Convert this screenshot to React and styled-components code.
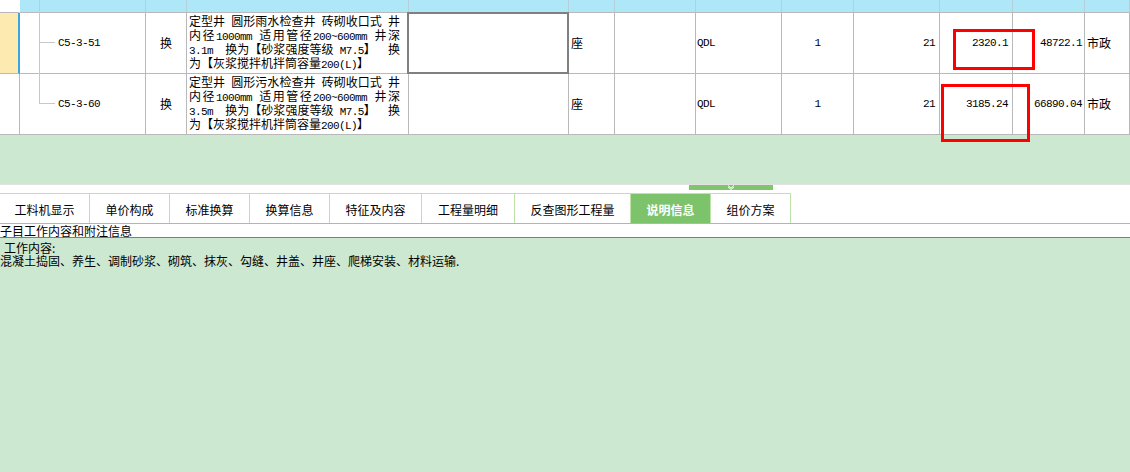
import React from 'react';
import styled, { createGlobalStyle } from 'styled-components';

const GlobalStyle = createGlobalStyle`
  html, body {
    margin: 0;
    padding: 0;
    background: #fff;
  }
  body {
    font-family: "Noto Sans CJK SC", sans-serif;
    font-size: 12px;
    color: #000;
  }
`;

const COLS = '20px 20px 106px 41px 222px 160px 46px 81px 86px 72px 86px 73px 72px 1fr';

const Page = styled.div`
  width: 1130px;
  height: 472px;
  display: flex;
  flex-direction: column;
  overflow: hidden;
  background: #cde8d0;
`;

/* ---------- grid ---------- */
const Table = styled.div`
  position: relative;
  background: #fff;
`;

const HeadRow = styled.div`
  display: grid;
  grid-template-columns: ${COLS};
  height: 13px;
`;

const HeadCell = styled.div`
  box-sizing: border-box;
  background: ${(p) => (p.$blank ? '#fff' : '#aee8f8')};
  border-right: 1px solid ${(p) => (p.$blank ? '#fff' : '#b4cfd8')};
  border-bottom: 1px solid #b9b9b9;
`;

const Row = styled.div`
  display: grid;
  grid-template-columns: ${COLS};
  height: 61px;
`;

const Cell = styled.div`
  position: relative;
  box-sizing: border-box;
  display: flex;
  align-items: center;
  justify-content: ${(p) => p.$align || 'flex-start'};
  padding: 0 ${(p) => p.$pr ?? 2}px 0 ${(p) => p.$pl ?? 2}px;
  border-right: 1px solid #b9b9b9;
  border-bottom: 1px solid #b9b9b9;
  white-space: nowrap;
  line-height: 14px;
  min-width: 0;
`;

const Marker = styled.div`
  box-sizing: border-box;
  background: ${(p) => (p.$current ? '#fdeab0' : '#fff')};
  border-right: ${(p) => (p.$current ? '2px solid #3aa8dc' : '1px solid #b9b9b9')};
  border-bottom: 1px solid #b9b9b9;
`;

const TreeCell = styled(Cell)`
  grid-column: span 2;
  padding-left: 38px;

  &::before {
    content: '';
    position: absolute;
    left: 19px;
    top: -1px;
    width: 1px;
    height: ${(p) => (p.$last ? '31px' : 'calc(100% + 1px)')};
    background: #c8c8c8;
  }
  &::after {
    content: '';
    position: absolute;
    left: 19px;
    top: 29px;
    width: 16px;
    height: 1px;
    background: #c8c8c8;
  }
`;

const Selected = styled(Cell)`
  &::after {
    content: '';
    position: absolute;
    left: -2px;
    top: -1px;
    right: -1px;
    bottom: -1px;
    border: 2px solid #808080;
  }
`;

const Desc = styled(Cell)`
  display: block;
  padding: 1px 8px 0 2px;
  line-height: 14px;
`;

const DescLine = styled.div`
  white-space: pre;
  height: 14px;
  text-align: ${(p) => (p.$justify ? 'justify' : 'left')};
  text-align-last: ${(p) => (p.$justify ? 'justify' : 'left')};
`;

const Num = styled.span`
  font-family: "Liberation Mono", monospace;
  font-size: 11px;
  letter-spacing: -0.6px;
`;

const RedBox = styled.div`
  position: absolute;
  box-sizing: border-box;
  border: 3px solid #ff0000;
  z-index: 2;
`;

/* ---------- tabs ---------- */
const Gap = styled.div`
  height: 49px;
  flex-shrink: 0;
`;

const TabArea = styled.div`
  position: relative;
  flex-shrink: 0;
  background: #fff;
  border-top: 1px solid #e2e2e2;
  padding-top: 8px;
`;

const Handle = styled.div`
  position: absolute;
  left: 689px;
  top: 0;
  width: 84px;
  height: 5px;
  background: #80c46c;
  display: flex;
  justify-content: center;
  align-items: flex-end;
`;

const TabStrip = styled.div`
  display: flex;
  height: 30px;
  border-bottom: 1px solid #98cc84;
`;

const Tab = styled.div`
  box-sizing: border-box;
  width: ${(p) => p.$w}px;
  display: flex;
  align-items: center;
  justify-content: center;
  padding-top: 2px;
  border-top: 1px solid #bde3ab;
  border-right: 1px solid #bde3ab;
  background: ${(p) => (p.$active ? '#7dc36b' : '#fff')};
  color: ${(p) => (p.$active ? '#fff' : '#000')};
  font-weight: ${(p) => (p.$active ? 700 : 400)};
  font-size: 12px;
  white-space: nowrap;
`;

const Caption = styled.div`
  flex-shrink: 0;
  height: 13px;
  line-height: 13px;
  background: #fff;
  border-bottom: 1px solid #7d7d7d;
  white-space: nowrap;
`;

const Content = styled.div`
  flex: 1;
  padding-top: 3px;
  line-height: 13px;
`;

const Label = styled.div`
  padding-left: 4px;
`;

// half-width runs get the narrow mono face, like the original bitmap font
const Mixed = ({ text }) =>
  text.split(/([\x20-\x7e]+)/).map((part, i) =>
    /^[\x20-\x7e]+$/.test(part) ? <Num key={i}>{part}</Num> : part
  );

const rows = [
  {
    code: 'C5-3-51',
    lines: [
      '定型井 圆形雨水检查井 砖砌收口式 井',
      '内径1000mm 适用管径200~600mm 井深',
      '3.1m  换为【砂浆强度等级 M7.5】  换',
      '为【灰浆搅拌机拌筒容量200(L)】',
    ],
    price: '2320.1',
    total: '48722.1',
    current: true,
  },
  {
    code: 'C5-3-60',
    lines: [
      '定型井 圆形污水检查井 砖砌收口式 井',
      '内径1000mm 适用管径200~600mm 井深',
      '3.5m  换为【砂浆强度等级 M7.5】  换',
      '为【灰浆搅拌机拌筒容量200(L)】',
    ],
    price: '3185.24',
    total: '66890.04',
    last: true,
  },
];

const tabs = [
  ['工料机显示', 90],
  ['单价构成', 80],
  ['标准换算', 80],
  ['换算信息', 80],
  ['特征及内容', 92],
  ['工程量明细', 93],
  ['反查图形工程量', 116],
  ['说明信息', 80, true],
  ['组价方案', 80],
];

export default function App() {
  return (
    <>
      <GlobalStyle />
      <Page>
        <Table>
          <HeadRow>
            <HeadCell $blank />
            {Array.from({ length: 13 }).map((_, i) => (
              <HeadCell key={i} />
            ))}
          </HeadRow>
          {rows.map((r) => {
            const EmptyCell = r.current ? Selected : Cell;
            return (
              <Row key={r.code}>
                <Marker $current={r.current} />
                <TreeCell $last={r.last}>
                  <Num>{r.code}</Num>
                </TreeCell>
                <Cell $align="center">换</Cell>
                <Desc>
                  {r.lines.map((l, i) => (
                    <DescLine key={i} $justify={i < 3}>
                      <Mixed text={l} />
                    </DescLine>
                  ))}
                </Desc>
                <EmptyCell />
                <Cell>座</Cell>
                <Cell />
                <Cell $pl={1}>
                  <Num>QDL</Num>
                </Cell>
                <Cell $align="center">
                  <Num>1</Num>
                </Cell>
                <Cell $align="flex-end" $pr={4}>
                  <Num>21</Num>
                </Cell>
                <Cell $align="flex-end" $pr={4}>
                  <Num>{r.price}</Num>
                </Cell>
                <Cell $align="flex-end" $pr={2}>
                  <Num>{r.total}</Num>
                </Cell>
                <Cell>市政</Cell>
              </Row>
            );
          })}
          <RedBox style={{ left: 953, top: 29, width: 82, height: 41 }} />
          <RedBox style={{ left: 941, top: 84, width: 89, height: 58 }} />
        </Table>

        <Gap />

        <TabArea>
          <Handle>
            <svg width="8" height="5" viewBox="0 0 8 5">
              <path d="M1 0.5 L4 3 L7 0.5 M1 2 L4 4.5 L7 2" stroke="#fff" strokeWidth="1" fill="none" />
            </svg>
          </Handle>
          <TabStrip>
            {tabs.map(([t, w, a]) => (
              <Tab key={t} $w={w} $active={a}>
                {t}
              </Tab>
            ))}
          </TabStrip>
        </TabArea>

        <Caption>子目工作内容和附注信息</Caption>
        <Content>
          <Label>工作内容:</Label>
          <div>混凝土捣固、养生、调制砂浆、砌筑、抹灰、勾缝、井盖、井座、爬梯安装、材料运输.</div>
        </Content>
      </Page>
    </>
  );
}
